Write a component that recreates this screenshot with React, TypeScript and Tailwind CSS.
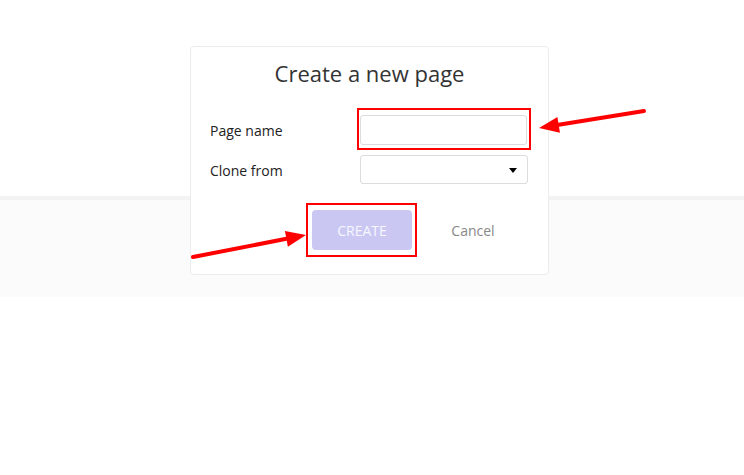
export default function App() {
  return (
    <div className="relative h-[475px] w-[744px] overflow-hidden bg-white font-['Open_Sans',sans-serif]">
      {/* page band behind the dialog */}
      <div className="pt-[196px]">
        <div className="h-[4px] bg-[#f3f3f3]" />
        <div className="h-[97px] bg-[#fbfbfb]" />
      </div>

      {/* dialog */}
      <div className="absolute left-[190px] top-[46px] flex h-[229px] w-[359px] flex-col rounded-[4px] border border-[#ececec] bg-white">
        <h1 className="pt-[11px] text-center text-[22px] leading-[30px] text-[#333]">Create a new page</h1>

        <div className="mt-[27px] flex h-[30px] items-center">
          <label className="w-[169px] pl-[19px] text-[14px] text-[#222]">Page name</label>
          <input className="h-[30px] w-[167px] rounded-[3px] border border-[#dcdcdc] bg-white outline-none" />
        </div>

        <div className="mt-[10px] flex h-[29px] items-center">
          <label className="w-[169px] pl-[19px] pt-[1px] text-[14px] text-[#222]">Clone from</label>
          <div className="relative h-[29px] w-[168px] rounded-[3px] border border-[#dcdcdc] bg-white">
            <span className="absolute right-[10px] top-[12px] h-0 w-0 border-x-[4px] border-t-[5px] border-x-transparent border-t-black" />
          </div>
        </div>

        <div className="mt-[26px] flex items-center">
          <button className="ml-[121px] h-[40px] w-[100px] rounded-[4px] bg-[#cac8f3] text-[14px] text-[#f7f7ff]">
            CREATE
          </button>
          <button className="ml-[11px] h-[40px] w-[100px] text-[14px] text-[#888]">Cancel</button>
        </div>
      </div>

      {/* annotation boxes */}
      <div className="absolute left-[357px] top-[108px] h-[42px] w-[174px] border-2 border-[#f00]" />
      <div className="absolute left-[306px] top-[203px] h-[54px] w-[111px] border-2 border-[#f00]" />

      {/* annotation arrows */}
      <svg className="absolute left-0 top-0" width="744" height="475" viewBox="0 0 744 475">
        <line x1="644" y1="111" x2="558.7" y2="124.8" stroke="#f00" strokeWidth="4" strokeLinecap="round" />
        <polygon points="539,128 557.4,116.9 560,132.7" fill="#f00" />
        <line x1="193" y1="257" x2="286.4" y2="238.8" stroke="#f00" strokeWidth="4" strokeLinecap="round" />
        <polygon points="306,235 284.9,230.9 287.9,246.7" fill="#f00" />
      </svg>
    </div>
  );
}
